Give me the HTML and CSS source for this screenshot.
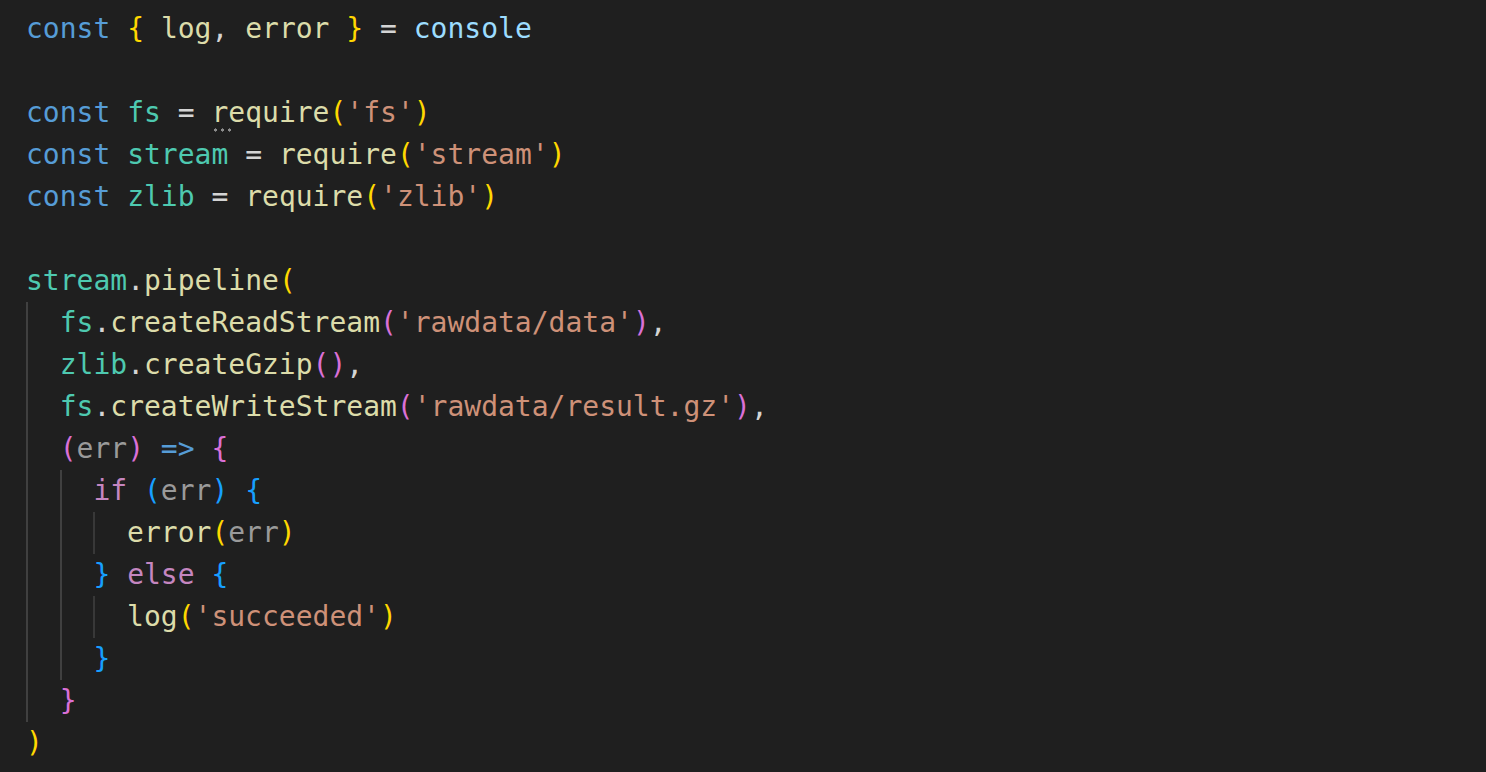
FILE: index.html
```html
<!DOCTYPE html>
<html>
<head>
<meta charset="utf-8">
<link rel="stylesheet" href="styles.css">
</head>
<body>
<div class="editor">
<div class="ln"><span class="kw">const</span> <span class="b1">{</span> <span class="fn">log</span><span class="p">,</span> <span class="fn">error</span> <span class="b1">}</span> <span class="p">=</span> <span class="obj">console</span></div>
<div class="ln"></div>
<div class="ln"><span class="kw">const</span> <span class="mod">fs</span> <span class="p">=</span> <span class="fn hint">r</span><span class="fn">equire</span><span class="b1">(</span><span class="str">'fs'</span><span class="b1">)</span></div>
<div class="ln"><span class="kw">const</span> <span class="mod">stream</span> <span class="p">=</span> <span class="fn">require</span><span class="b1">(</span><span class="str">'stream'</span><span class="b1">)</span></div>
<div class="ln"><span class="kw">const</span> <span class="mod">zlib</span> <span class="p">=</span> <span class="fn">require</span><span class="b1">(</span><span class="str">'zlib'</span><span class="b1">)</span></div>
<div class="ln"></div>
<div class="ln"><span class="mod">stream</span><span class="p">.</span><span class="fn">pipeline</span><span class="b1">(</span></div>
<div class="ln"><span class="ind g"></span><span class="mod">fs</span><span class="p">.</span><span class="fn">createReadStream</span><span class="b2">(</span><span class="str">'rawdata/data'</span><span class="b2">)</span><span class="p">,</span></div>
<div class="ln"><span class="ind g"></span><span class="mod">zlib</span><span class="p">.</span><span class="fn">createGzip</span><span class="b2">()</span><span class="p">,</span></div>
<div class="ln"><span class="ind g"></span><span class="mod">fs</span><span class="p">.</span><span class="fn">createWriteStream</span><span class="b2">(</span><span class="str">'rawdata/result.gz'</span><span class="b2">)</span><span class="p">,</span></div>
<div class="ln"><span class="ind g"></span><span class="b2">(</span><span class="par">err</span><span class="b2">)</span> <span class="kw">=&gt;</span> <span class="b2">{</span></div>
<div class="ln"><span class="ind g"></span><span class="ind g"></span><span class="ctl">if</span> <span class="b3">(</span><span class="par">err</span><span class="b3">)</span> <span class="b3">{</span></div>
<div class="ln"><span class="ind g"></span><span class="ind g"></span><span class="ind g3"></span><span class="fn">error</span><span class="b1">(</span><span class="par">err</span><span class="b1">)</span></div>
<div class="ln"><span class="ind g"></span><span class="ind g"></span><span class="b3">}</span> <span class="ctl">else</span> <span class="b3">{</span></div>
<div class="ln"><span class="ind g"></span><span class="ind g"></span><span class="ind g3"></span><span class="fn">log</span><span class="b1">(</span><span class="str">'succeeded'</span><span class="b1">)</span></div>
<div class="ln"><span class="ind g"></span><span class="ind g"></span><span class="b3">}</span></div>
<div class="ln"><span class="ind g"></span><span class="b2">}</span></div>
<div class="ln"><span class="b1">)</span></div>
</div>
</body>
</html>
```

FILE: styles.css
```css
html, body {
  margin: 0;
  padding: 0;
  background: #1f1f1f;
}
.editor {
  padding: 8px 0 0 26px;
  font-family: "DejaVu Sans Mono", "Liberation Mono", monospace;
  font-size: 28px;
  line-height: 42px;
  color: #d4d4d4;
  height: 772px;
  box-sizing: border-box;
}
.ln {
  height: 42px;
  white-space: pre;
}
.ind {
  display: inline-block;
  width: 2ch;
  height: 42px;
  vertical-align: top;
}
.g {
  background: linear-gradient(#404040, #404040) left top / 2px 100% no-repeat;
}
.g3 {
  background: linear-gradient(#383838, #383838) left top / 2px 100% no-repeat;
}
.kw { color: #569cd6; }
.mod { color: #4ec9b0; }
.fn { color: #dcdcaa; }
.obj { color: #9cdcfe; }
.str { color: #ce9178; }
.p { color: #d4d4d4; }
.ctl { color: #c586c0; }
.par { color: #9a9a9a; }
.b1 { color: #ffd700; }
.b2 { color: #da70d6; }
.b3 { color: #179fff; }
.hint {
  position: relative;
  display: inline-block;
  height: 42px;
  vertical-align: top;
}
.hint::after {
  content: "";
  position: absolute;
  left: 1px;
  top: 36px;
  width: 20px;
  height: 4px;
  background: radial-gradient(circle, #8c8c8c 1.4px, transparent 1.8px) 0 0 / 7px 4px repeat-x;
}
```
